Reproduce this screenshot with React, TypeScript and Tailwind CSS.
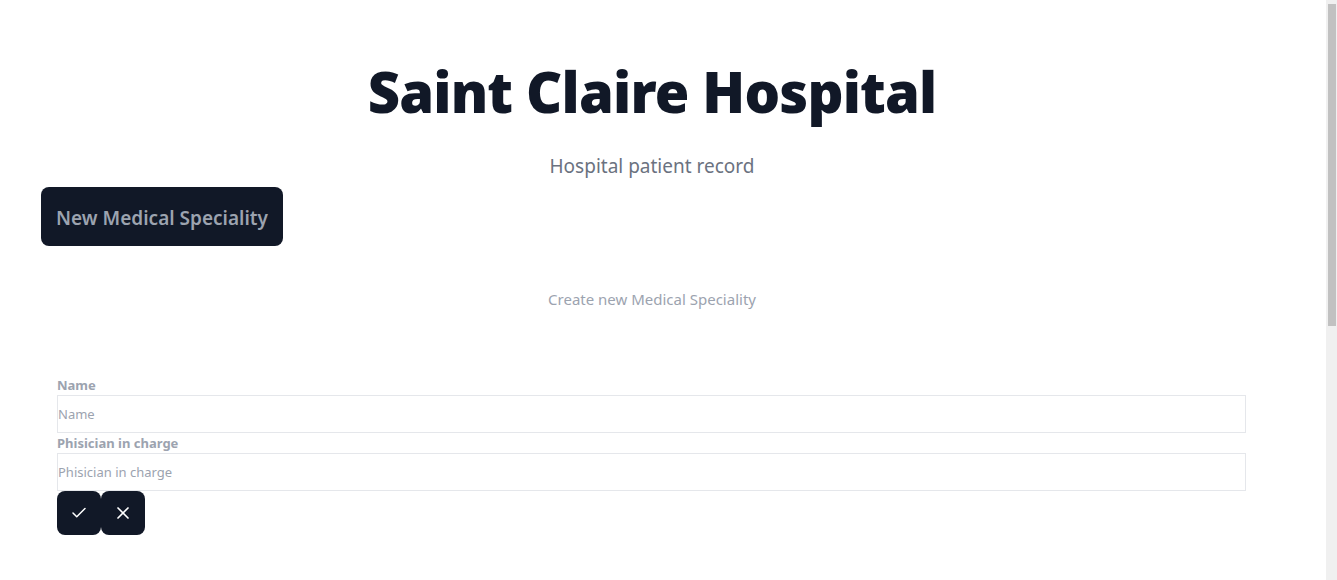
import React from 'react';
import { Check, X } from 'lucide-react';

const font = { fontFamily: '"Noto Sans", "Open Sans", sans-serif' };

export default function App() {
  return (
    <div className="flex h-[580px] w-full overflow-hidden bg-white" style={font}>
      <div className="flex-1 min-w-0">
        <div className="w-[1304px]">
          <h1 className="pt-[57px] text-center text-[56px] font-black leading-[68px] tracking-[-0.8px] text-[#111827]">
            Saint Claire Hospital
          </h1>
          <p className="mt-[27px] text-center text-[19px] leading-[28px] text-[#6b7280]">Hospital patient record</p>
          <div className="mt-[7px] pl-[41px]">
            <button className="h-[59px] w-[242px] rounded-lg bg-[#111827] pt-[3px] text-[19px] font-semibold text-[#9ca3af]">
              New Medical Speciality
            </button>
          </div>
          <p className="mt-[41px] text-center text-[15px] leading-[24px] text-[#9ca3af]">Create new Medical Speciality</p>
          <form className="mt-[65px] flex flex-col pl-[57px] pr-[58px]">
            <label className="text-[13px] font-bold leading-[19px] text-[#9ca3af]">Name</label>
            <input
              placeholder="Name"
              className="h-[38px] border border-[#e5e7eb] px-0 text-[13px] placeholder:text-[#9ca3af] outline-none"
            />
            <label className="mt-[1px] text-[13px] font-bold leading-[19px] text-[#9ca3af]">Phisician in charge</label>
            <input
              placeholder="Phisician in charge"
              className="h-[38px] border border-[#e5e7eb] px-0 text-[13px] placeholder:text-[#9ca3af] outline-none"
            />
            <div className="flex">
              <button type="button" className="flex h-[44px] w-[44px] items-center justify-center rounded-lg bg-[#111827] text-white">
                <Check size={18} strokeWidth={2} />
              </button>
              <button type="button" className="flex h-[44px] w-[44px] items-center justify-center rounded-lg bg-[#111827] text-white">
                <X size={20} strokeWidth={2} />
              </button>
            </div>
          </form>
        </div>
      </div>
      <div className="flex w-[11px] shrink-0 flex-col bg-[#f0f0f0] pt-[4px]">
        <div className="ml-[2px] h-[322px] w-[8px] bg-[#c1c1c1]" />
      </div>
    </div>
  );
}
